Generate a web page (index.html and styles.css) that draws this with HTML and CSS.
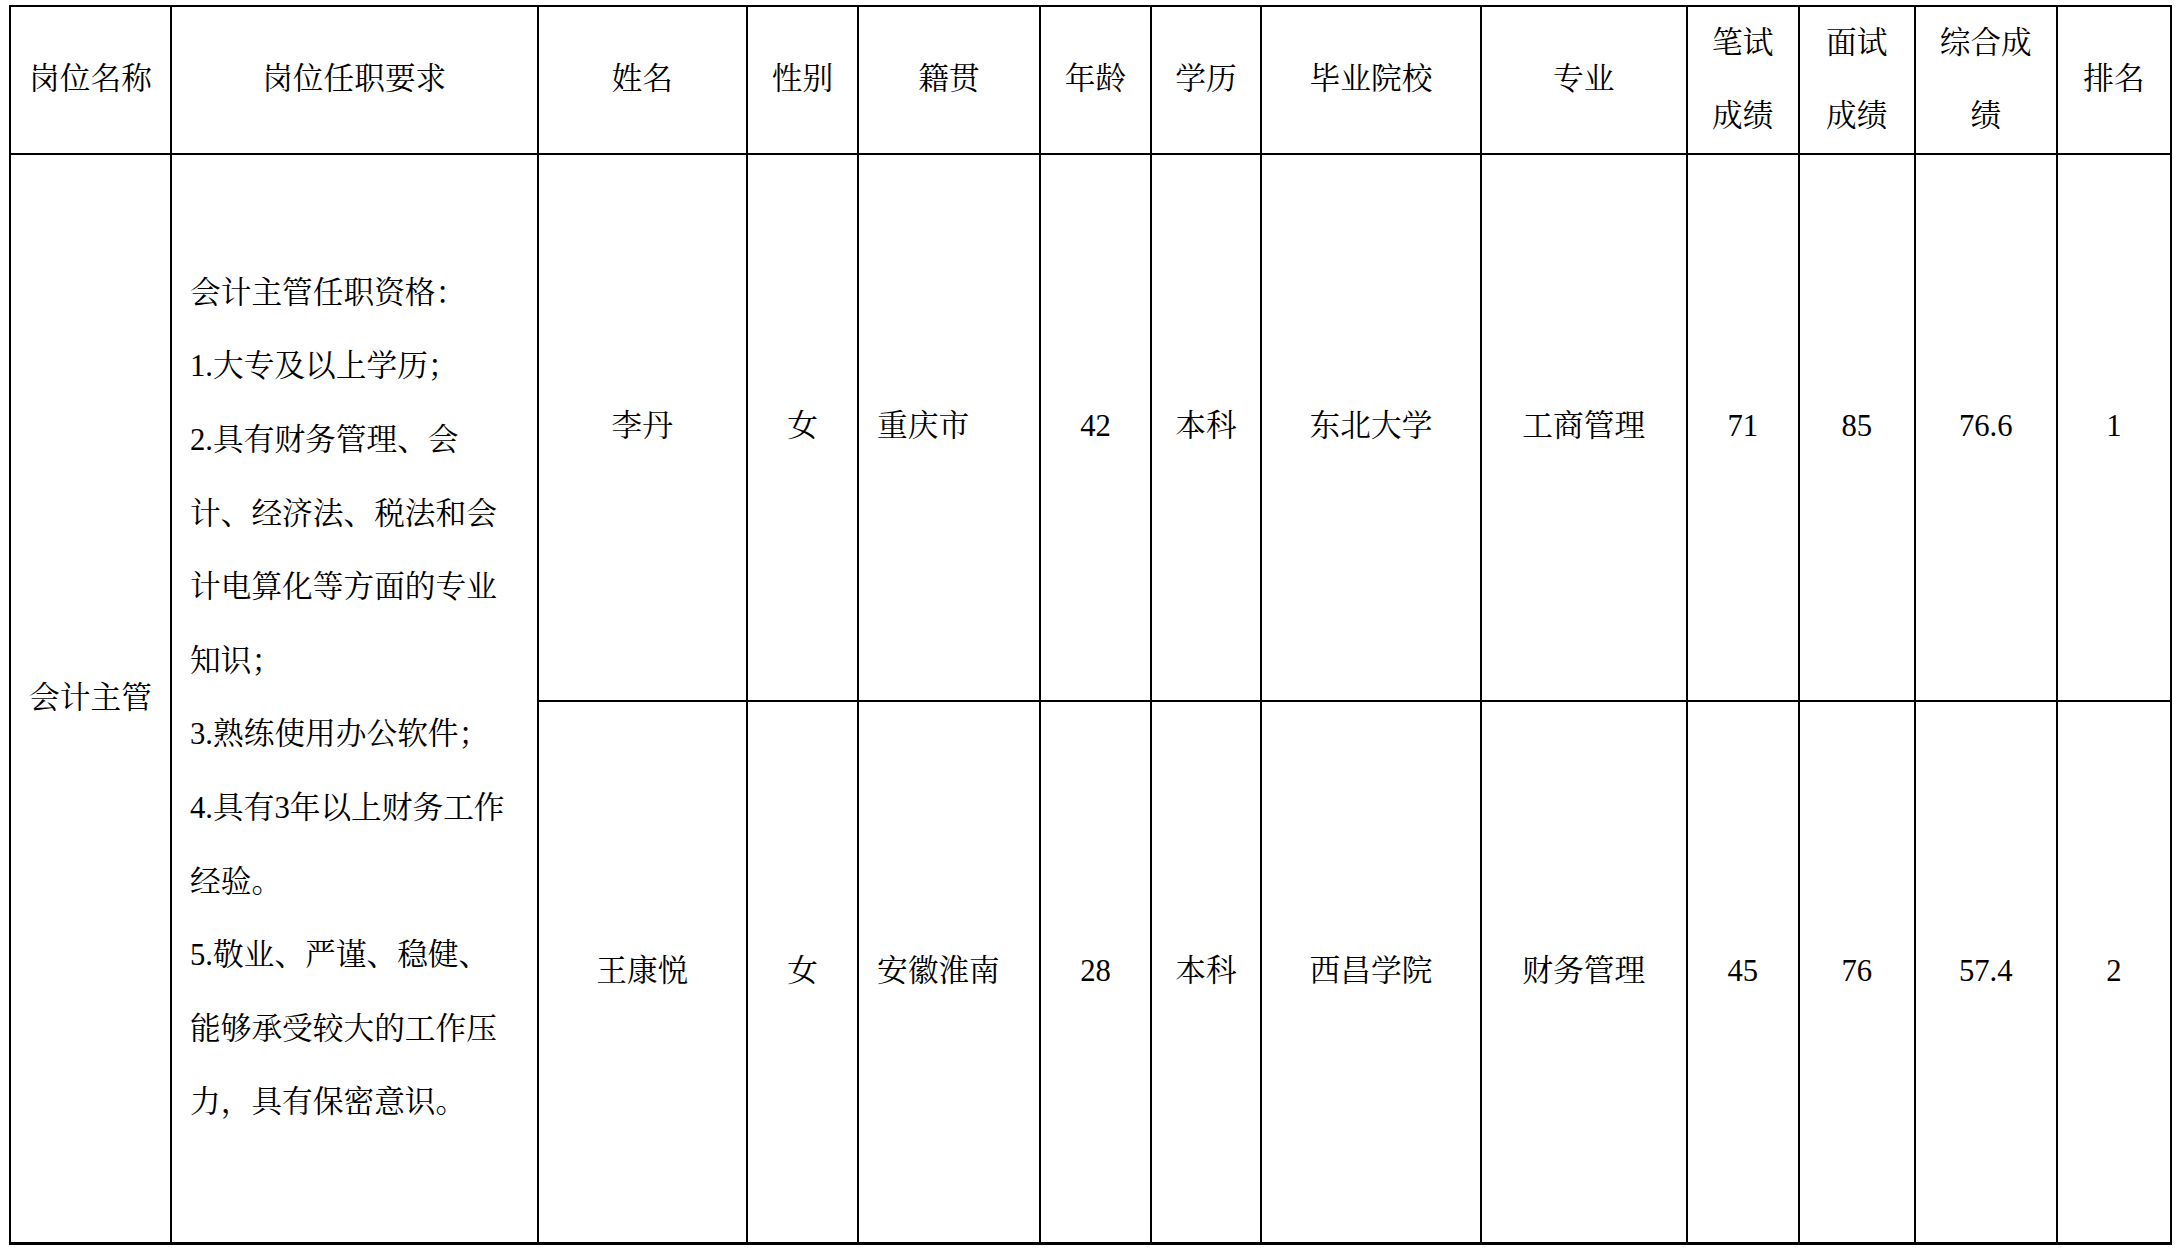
FILE: index.html
```html
<!DOCTYPE html>
<html lang="zh-CN">
<head>
<meta charset="utf-8">
<title>会计主管 成绩表</title>
<link rel="stylesheet" href="styles.css">
</head>
<body>
<table class="roster">
  <colgroup>
    <col class="c-post">
    <col class="c-req">
    <col class="c-name">
    <col class="c-sex">
    <col class="c-home">
    <col class="c-age">
    <col class="c-edu">
    <col class="c-school">
    <col class="c-major">
    <col class="c-written">
    <col class="c-interview">
    <col class="c-total">
    <col class="c-rank">
  </colgroup>
  <thead>
    <tr class="head-row">
      <th>岗位名称</th>
      <th>岗位任职要求</th>
      <th>姓名</th>
      <th>性别</th>
      <th>籍贯</th>
      <th>年龄</th>
      <th>学历</th>
      <th>毕业院校</th>
      <th>专业</th>
      <th>笔试成绩</th>
      <th>面试成绩</th>
      <th>综合成绩</th>
      <th>排名</th>
    </tr>
  </thead>
  <tbody>
    <tr class="row-a">
      <td rowspan="2">会计主管</td>
      <td rowspan="2" class="req">
        <p>会计主管任职资格：</p>
        <p>1.大专及以上学历；</p>
        <p>2.具有财务管理、会<br>计、经济法、税法和会<br>计电算化等方面的专业<br>知识；</p>
        <p>3.熟练使用办公软件；</p>
        <p>4.具有3年以上财务工作<br>经验。</p>
        <p>5.敬业、严谨、稳健、<br>能够承受较大的工作压<br>力，具有保密意识。</p>
      </td>
      <td>李丹</td>
      <td>女</td>
      <td class="left">重庆市</td>
      <td>42</td>
      <td>本科</td>
      <td>东北大学</td>
      <td>工商管理</td>
      <td>71</td>
      <td>85</td>
      <td>76.6</td>
      <td>1</td>
    </tr>
    <tr class="row-b">
      <td>王康悦</td>
      <td>女</td>
      <td class="left">安徽淮南</td>
      <td>28</td>
      <td>本科</td>
      <td>西昌学院</td>
      <td>财务管理</td>
      <td>45</td>
      <td>76</td>
      <td>57.4</td>
      <td>2</td>
    </tr>
  </tbody>
</table>
</body>
</html>
```
FILE: styles.css
```css
html, body {
  margin: 0;
  padding: 0;
  background: #ffffff;
}

body {
  font-family: "Liberation Serif", "Noto Serif CJK SC", "Noto Sans CJK SC", serif;
  font-size: 30.7px;
  color: #000000;
}

.roster {
  margin: 5px 0 0 9px;
  border-collapse: collapse;
  table-layout: fixed;
  width: 2163px;
  border-bottom: 3px solid #000;
}

.c-post { width: 161px; }
.c-req { width: 366.5px; }
.c-name { width: 209.5px; }
.c-sex { width: 111px; }
.c-home { width: 182px; }
.c-age { width: 111px; }
.c-edu { width: 110px; }
.c-school { width: 220px; }
.c-major { width: 205.5px; }
.c-written { width: 112.5px; }
.c-interview { width: 115.5px; }
.c-total { width: 142.5px; }
.c-rank { width: 114px; }

.roster th,
.roster td {
  border: 2px solid #000;
  padding: 0 18px;
  line-height: 73.6px;
  text-align: center;
  vertical-align: middle;
  font-weight: normal;
}

.roster th {
  line-height: 72.8px;
}

.head-row { height: 147.5px; }
.row-a { height: 547px; }
.row-b { height: 543px; }

.roster tbody tr.row-b td {
  border-bottom: 3px solid #000;
}

.roster td[rowspan] {
  border-bottom: 3px solid #000;
}

.roster td.req {
  text-align: left;
}

.roster td.left {
  text-align: left;
}

.req p {
  margin: 0;
  white-space: nowrap;
}
```
